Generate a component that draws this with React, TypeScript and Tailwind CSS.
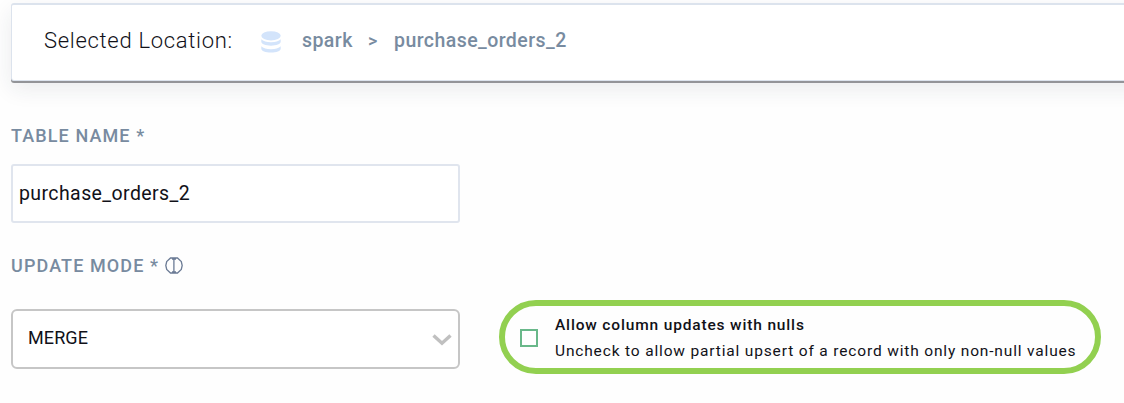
function DatabaseIcon() {
  return (
    <svg className="mt-px h-[22px] w-5 shrink-0" viewBox="0 0 20 22" fill="#d3e4fb">
      <ellipse cx="10" cy="4.8" rx="9.7" ry="4.6" />
      <path d="M.3 8.200c1.800 2 5.400 3 9.700 3s7.900-1 9.700-3v2.600c0 2.100-4.300 3.900-9.700 3.900S.3 12.900.3 10.800z" />
      <path d="M.3 15.200c1.800 2 5.400 3 9.700 3s7.900-1 9.700-3v2.500c0 2.100-4.300 3.900-9.700 3.900S.3 19.800.3 17.700z" />
    </svg>
  );
}

function InfoIcon() {
  return (
    <svg className="h-[17px] w-[18px] shrink-0" viewBox="0 0 18 17" fill="none" stroke="#6b7b95" strokeWidth="1.300">
      <path d="M5.500 1h7L16.300 4.500 17.200 8.500 16.300 12.500 12.500 16h-7L1.700 12.500.8 8.500 1.700 4.500zM8.900 1.500v14M7 2h4M7 15h4" />
    </svg>
  );
}

export default function App() {
  return (
    <main className="h-[403px] w-full overflow-hidden bg-[#fefefe] pt-[3px] pl-[11px] font-['Roboto',sans-serif] text-[#111118]">
      <header className="-mr-8 flex h-[78px] items-center rounded-[3px] border border-t-2 border-[#dce3ed] bg-white pb-[3px] pl-8 shadow-[0_2px_0_0_#939498,0_8px_22px_rgba(30,45,70,0.09)]">
        <h1 className="w-[217px] text-[22px] leading-7 font-light tracking-[0.7px] whitespace-nowrap">Selected Location:</h1>
        <DatabaseIcon />
        <nav className="ml-[21px] flex items-center text-[19.5px] leading-6 font-medium tracking-[0.44px] whitespace-nowrap text-[#788ba0]">
          <span className="w-[66px]">spark</span>
          <span className="w-[26px] text-[18px]">&gt;</span>
          <span>purchase_orders_2</span>
        </nav>
      </header>

      <section className="mt-11">
        <label htmlFor="table-name" className="block h-[39px] text-[18px] leading-[22px] font-medium tracking-[1.1px] text-[#788ba0]">TABLE NAME *</label>
        <input
          id="table-name"
          defaultValue="purchase_orders_2"
          className="block h-[59px] w-[449px] rounded-[3px] border-2 border-[#e0e5ee] bg-white pr-3 pl-1.5 text-[19.5px] tracking-[0.41px] outline-none"
        />
      </section>

      <section className="mt-8">
        <div className="flex h-[45px] items-start gap-[6px] text-[18px] leading-[22px] font-medium tracking-[1.1px] text-[#788ba0]">
          <span>UPDATE MODE *</span>
          <span className="pt-[2px]"><InfoIcon /></span>
        </div>
        <div className="flex items-start">
          <button className="mt-[9px] flex h-[60px] w-[449px] items-center justify-between rounded-[6px] border-2 border-[#c6c6c6] bg-white pr-1.5 pb-[3px] pl-[15px] text-[18px] tracking-[0.1px]">
            <span>MERGE</span>
            <svg className="mt-[5px] h-3 w-5" viewBox="0 0 20 12" fill="none" stroke="#c0c0c0" strokeWidth="3.400">
              <path d="M1.500 1.500 10 9.300l8.500-7.800" />
            </svg>
          </button>
          <label className="ml-[39px] flex h-[74px] w-[602px] items-center rounded-full border-[6px] border-[#92d050] pl-[15px]">
            <input type="checkbox" className="mt-0.5 size-[18px] shrink-0 appearance-none border-2 border-[#69b88a] bg-white" />
            <span className="mt-0.5 ml-[17px] flex flex-col text-[15.5px] leading-[26px] whitespace-nowrap">
              <span className="font-medium tracking-[0.84px]">Allow column updates with nulls</span>
              <span className="tracking-[0.84px]">Uncheck to allow partial upsert of a record with only non-null values</span>
            </span>
          </label>
        </div>
      </section>
    </main>
  );
}
